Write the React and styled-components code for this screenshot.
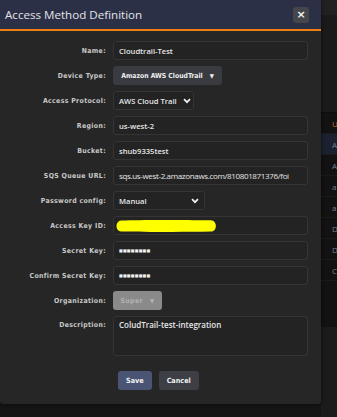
import React from "react";
import styled, { createGlobalStyle } from "styled-components";

const Global = createGlobalStyle`
  html, body { margin: 0; padding: 0; background: #151515; }
  #root { width: 337px; height: 417px; overflow: hidden; }
  * { box-sizing: border-box; }
`;

const Page = styled.div`
  display: grid;
  grid-template-columns: 321px 1fr;
  width: 337px;
  height: 417px;
  background: #151515;
`;

const Modal = styled.div`
  height: 404px;
  background: #262626;
  border-radius: 0 0 3px 3px;
  box-shadow: 0 0 4px rgba(0,0,0,0.6);
  display: flex;
  flex-direction: column;
  position: relative;
  z-index: 1;
`;

const Header = styled.div`
  height: 31px;
  background: #2c3046;
  border-bottom: 2px solid #f07d12;
  display: flex;
  align-items: center;
  justify-content: space-between;
  padding: 0 12px 0 5px;
`;

const Title = styled.div`
  font-family: "Open Sans", sans-serif;
  font-size: 11.6px;
  color: #e2e3e8;
`;

const Close = styled.div`
  width: 16px;
  height: 16px;
  background: #45464b;
  border-radius: 3px;
  display: flex;
  align-items: center;
  justify-content: center;
  color: #f2f2f2;
  font-family: "DejaVu Sans", sans-serif;
  font-weight: bold;
  font-size: 11px;
  line-height: 1;
`;

const Form = styled.div`
  display: grid;
  grid-template-columns: 106px 195px;
  column-gap: 7px;
  row-gap: 6px;
  padding: 10px 13px 13px 0;
  align-items: center;
`;

const Label = styled.div`
  text-align: right;
  font-family: "DejaVu Sans Condensed", "DejaVu Sans", sans-serif;
  font-weight: bold;
  font-size: 6.9px;
  color: #c9c9c9;
  letter-spacing: 0.35px;
  white-space: nowrap;
  align-self: ${p => (p.$top ? "start" : "center")};
  padding-top: ${p => (p.$top ? "5px" : "0")};
`;

const Input = styled.div`
  height: 19px;
  width: ${p => p.$w || "195px"};
  background: #232323;
  border: 1px solid #353535;
  border-radius: 3px;
  display: flex;
  align-items: center;
  padding: 0 5px;
  font-family: "Open Sans", sans-serif;
  font-weight: 600;
  font-size: 7.6px;
  color: #e6e6e6;
  white-space: nowrap;
  overflow: hidden;
  gap: 6px;
  justify-content: ${p => (p.$select ? "space-between" : "flex-start")};
`;

const TextArea = styled(Input)`
  height: 40px;
  align-items: flex-start;
  padding-top: 2px;
  font-size: 8px;
`;

const Url = styled.span`
  letter-spacing: -0.35px;
  font-weight: 400;
  font-size: 8px;
`;

const Dots = styled.span`
  font-family: "DejaVu Sans", sans-serif;
  font-weight: bold;
  font-size: 4px;
  letter-spacing: 0.15px;
  color: #f0f0f0;
`;

const DropButton = styled.div`
  height: 19px;
  width: ${p => p.$w};
  border-radius: 3px;
  background: ${p => (p.$disabled ? "#8a8a8a" : "#3a3b41")};
  color: ${p => (p.$disabled ? "#b3b3b3" : "#f0f0f0")};
  display: flex;
  align-items: center;
  justify-content: center;
  gap: 7px;
  font-family: "DejaVu Sans Condensed", "DejaVu Sans", sans-serif;
  font-weight: bold;
  font-size: 6.8px;
  letter-spacing: ${p => (p.$disabled ? "0.4px" : "0")};
`;

const Caret = styled.span`
  font-size: 6px;
`;

const Actions = styled.div`
  grid-column: 2;
  display: flex;
  gap: 7px;
  padding-left: 5px;
  margin-top: 9px;
`;

const Button = styled.div`
  height: 19px;
  padding: 0 ${p => p.$pad};
  border-radius: 3px;
  background: ${p => (p.$primary ? "#4a5474" : "#3e3f44")};
  color: #f0f0f0;
  display: flex;
  align-items: center;
  font-family: "DejaVu Sans Condensed", "DejaVu Sans", sans-serif;
  font-weight: bold;
  font-size: 7.2px;
`;

const Side = styled.div`
  display: flex;
  flex-direction: column;
  overflow: hidden;
`;

const SideTop = styled.div`
  height: 15px;
  background: #212121;
`;

const SideGap = styled.div`
  height: 98px;
  background: #1a1a1a;
  border-bottom: 1px solid #0e0e0e;
`;

const SideRow = styled.div`
  height: 21px;
  display: flex;
  align-items: center;
  padding-left: 11px;
  background: ${p => (p.$active ? "#1b2130" : "#121212")};
  border-bottom: 1px solid #1a1a1a;
  font-family: "Open Sans", sans-serif;
  font-size: 8px;
  color: ${p => p.$color || "#7a8090"};
`;

const SideRest = styled.div`
  background: ${p => (p.$light ? "#1b1b1b" : "#121212")};
  flex: ${p => (p.$light ? 1 : "none")};
  height: ${p => p.$h || "auto"};
`;

const Chevron = () => (
  <svg width="8" height="6" viewBox="0 0 8 6" style={{ flex: "none" }}>
    <path d="M1 1.2 L4 4.2 L7 1.2" fill="none" stroke="#f0f0f0" strokeWidth="1.7" />
  </svg>
);

const Highlight = () => (
  <svg width="103" height="14" viewBox="0 0 103 14" style={{ marginLeft: "-4px", flex: "none" }}>
    <path d="M6 1.5 C 30 0.5, 70 1, 96 1.2 C 102 1.5, 103 12, 96 12.6 C 70 13.2, 30 13, 6 12.5 C 0 12.2, 0 2, 6 1.5 Z" fill="#ffff00" />
  </svg>
);

export default function App() {
  return (
    <>
      <Global />
      <Page>
        <Modal>
          <Header>
            <Title>Access Method Definition</Title>
            <Close>×</Close>
          </Header>
          <Form>
            <Label>Name:</Label>
            <Input>Cloudtrail-Test</Input>

            <Label>Device Type:</Label>
            <DropButton $w="109px">Amazon AWS CloudTrail <Caret>▼</Caret></DropButton>

            <Label>Access Protocol:</Label>
            <Input $w="81px" $select>AWS Cloud Trail <Chevron /></Input>

            <Label>Region:</Label>
            <Input>us-west-2</Input>

            <Label>Bucket:</Label>
            <Input>shub9335test</Input>

            <Label>SQS Queue URL:</Label>
            <Input><Url>sqs.us-west-2.amazonaws.com/810801871376/foi</Url></Input>

            <Label>Password config:</Label>
            <Input $w="92px" $select>Manual <Chevron /></Input>

            <Label>Access Key ID:</Label>
            <Input><Highlight /></Input>

            <Label>Secret Key:</Label>
            <Input><Dots>■■■■■■■■</Dots></Input>

            <Label>Confirm Secret Key:</Label>
            <Input><Dots>■■■■■■■■</Dots></Input>

            <Label>Organization:</Label>
            <DropButton $w="49px" $disabled>Super <Caret>▼</Caret></DropButton>

            <Label $top>Description:</Label>
            <TextArea>ColudTrail-test-integration</TextArea>

            <Actions>
              <Button $primary $pad="8px">Save</Button>
              <Button $pad="8px">Cancel</Button>
            </Actions>
          </Form>
        </Modal>
        <Side>
          <SideTop />
          <SideGap />
          <SideRow $color="#d0652a">U</SideRow>
          <SideRow $active>A</SideRow>
          <SideRow>A</SideRow>
          <SideRow>a</SideRow>
          <SideRow>a</SideRow>
          <SideRow>D</SideRow>
          <SideRow>D</SideRow>
          <SideRow>C</SideRow>
          <SideRest $h="46px" />
          <SideRest $light />
        </Side>
      </Page>
    </>
  );
}
